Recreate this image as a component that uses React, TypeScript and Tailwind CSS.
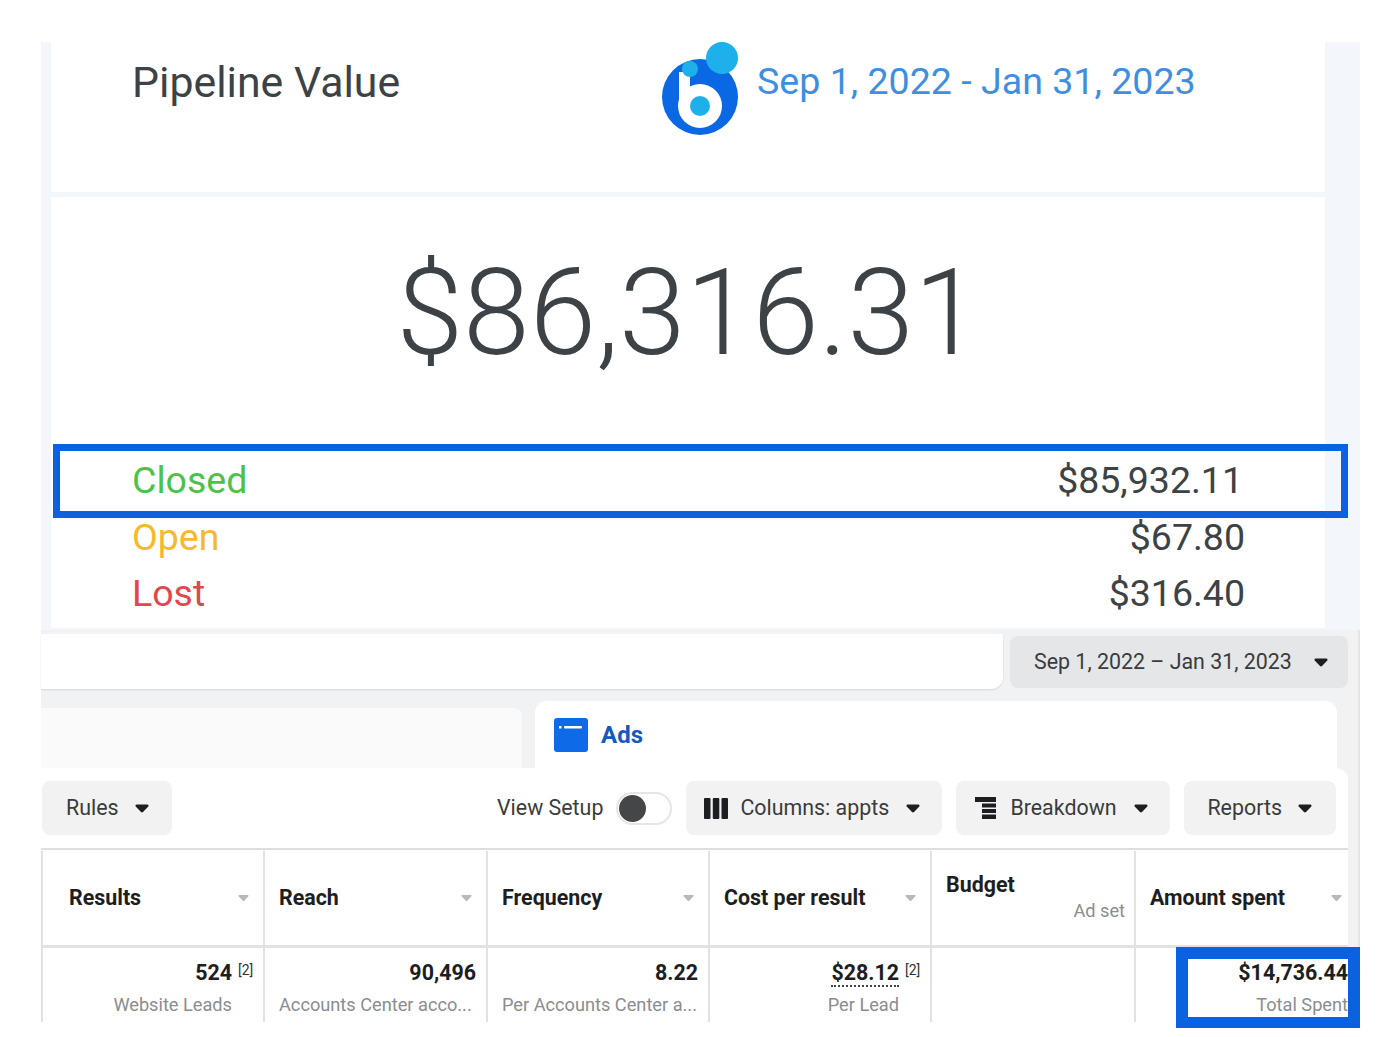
import React from "react"

function Caret({ className = "w-[14px] h-[9px] text-[#1c1e21]" }: { className?: string }) {
  return (
    <svg viewBox="0 0 14 9" className={className} fill="currentColor">
      <path d="M1.6 0.6h10.8c1 0 1.5 1.1.9 1.8L8 8c-.5.6-1.5.6-2 0L.7 2.4C.1 1.7.6.6 1.6.6z" />
    </svg>
  )
}

function Logo() {
  return (
    <svg viewBox="0 0 76 93" className="w-[76px] h-[93px] shrink-0">
      <circle cx="38" cy="55" r="38" fill="#0b68e4" />
      <circle cx="38" cy="64" r="22" fill="#ffffff" />
      <rect x="17" y="30" width="11" height="34" fill="#ffffff" />
      <circle cx="38" cy="64" r="10" fill="#1db0ea" />
      <circle cx="60" cy="16" r="16" fill="#1db0ea" />
      <circle cx="28" cy="27" r="8" fill="#1db0ea" />
    </svg>
  )
}

function ToolButton({ label, icon, className }: { label: string; icon?: React.ReactNode; className: string }) {
  return (
    <div className={`h-[54px] bg-[#f2f2f2] rounded-lg flex items-center ${className}`}>
      {icon}
      <span className="text-[21.4px] text-[#3a3b3d]">{label}</span>
      <Caret className="w-[14px] h-[9px] text-[#1c1e21] ml-auto" />
    </div>
  )
}

const headers = [
  { title: "Results", w: "w-[222px]", pad: "pl-[26px]" },
  { title: "Reach", w: "w-[223px]", pad: "pl-[14px]" },
  { title: "Frequency", w: "w-[222px]", pad: "pl-[14px]" },
  { title: "Cost per result", w: "w-[222px]", pad: "pl-[14px]" },
]

const cells = [
  { value: "524", ref: true, sub: "Website Leads", w: "w-[222px]", subCls: "text-right pr-[21px]", dotted: false },
  { value: "90,496", ref: false, sub: "Accounts Center acco...", w: "w-[223px]", subCls: "text-left pl-[14px]", dotted: false },
  { value: "8.22", ref: false, sub: "Per Accounts Center a...", w: "w-[222px]", subCls: "text-left pl-[14px]", dotted: false },
  { value: "$28.12", ref: true, sub: "Per Lead", w: "w-[222px]", subCls: "text-right pr-[21px]", dotted: true },
]

export default function App() {
  return (
    <div className="relative w-[1400px] h-[1037px] bg-white overflow-hidden pt-[42px] pl-[41px] font-['Roboto',sans-serif]">
      <div className="w-[1319px]">
        {/* Pipeline value report */}
        <div className="flex bg-[#f3f6fa] h-[588px] pl-[10px] pr-[35px]">
          <div className="w-[1274px] flex flex-col gap-[5px]">
            <div className="h-[150px] bg-white flex items-start pl-[81px]">
              <span className="w-[530px] mt-[15px] text-[42.8px] leading-[50px] text-[#3c4245]">Pipeline Value</span>
              <Logo />
              <span className="ml-[19px] mt-[15px] text-[37.6px] leading-[48px] text-[#3f8fe0]">
                Sep 1, 2022 - Jan 31, 2023
              </span>
            </div>
            <div className="h-[431px] bg-white pl-[81px] pr-[80px]">
              <div className="h-[240px] pt-[43px] text-center text-[120px] leading-[146px] font-light text-[#3c4245]">
                $86,316.31
              </div>
              <div className="flex justify-between text-[37.5px] leading-[56.5px] text-[#3c4245] mt-[15px]">
                <span className="text-[#4cc24a]">Closed</span>
                <span className="mr-[2px]">$85,932.11</span>
              </div>
              <div className="flex justify-between text-[37.5px] leading-[56.5px] text-[#3c4245]">
                <span className="text-[#f5b92e]">Open</span>
                <span>$67.80</span>
              </div>
              <div className="flex justify-between text-[37.5px] leading-[56.5px] text-[#3c4245]">
                <span className="text-[#e0484e]">Lost</span>
                <span>$316.40</span>
              </div>
            </div>
          </div>
        </div>

        {/* Ads manager */}
        <div className="h-[392px] bg-[#f1f2f3] border-r-2 border-[#e4e4e4]">
          <div className="flex pt-[4px] h-[59px]">
            <div className="w-[962px] h-[55px] bg-white rounded-br-xl shadow-[0_1px_2px_rgba(0,0,0,0.12)]" />
            <div className="ml-[7px] mt-[2px] w-[338px] h-[52px] bg-[#e4e6e8] rounded-lg flex items-center pl-[24px] pr-[20px]">
              <span className="text-[21.4px] text-[#3a3b3d]">Sep 1, 2022 – Jan 31, 2023</span>
              <Caret className="w-[14px] h-[9px] text-[#1c1e21] ml-auto" />
            </div>
          </div>

          <div className="flex items-end h-[79px]">
            <div className="w-[481px] h-[60px] bg-[#fafafa] rounded-tr-lg" />
            <div className="ml-[13px] w-[802px] h-[67px] bg-white rounded-t-xl flex items-center pl-[19px]">
              <svg viewBox="0 0 34 34" className="w-[34px] h-[34px]">
                <rect width="34" height="34" rx="3" fill="#0f6ae8" />
                <rect x="5" y="8" width="2.5" height="2.5" fill="#ffffff" />
                <rect x="10" y="8" width="18" height="2.5" rx="1" fill="#ffffff" />
              </svg>
              <span className="ml-[13px] text-[24px] font-bold text-[#1558c0]">Ads</span>
            </div>
          </div>

          <div className="w-[1307px] h-[80px] bg-white rounded-tr-xl flex items-center">
            <div className="ml-[1px] w-[130px] h-[54px] bg-[#f2f2f2] rounded-lg flex items-center pl-[24px] pr-[23px]">
              <span className="text-[21.4px] text-[#3a3b3d]">Rules</span>
              <Caret className="w-[14px] h-[9px] text-[#1c1e21] ml-auto" />
            </div>
            <span className="ml-[325px] text-[21.4px] text-[#3a3b3d]">View Setup</span>
            <div className="ml-[13px] w-[56px] h-[33px] rounded-full border-2 border-[#e6e6e6] bg-white flex items-center pl-[1px]">
              <div className="w-[27px] h-[27px] rounded-full bg-[#444648]" />
            </div>
            <ToolButton
              label="Columns: appts"
              className="ml-[14px] w-[256px] pl-[18px] pr-[22px]"
              icon={
                <svg viewBox="0 0 24 21" className="w-[24px] h-[21px] mr-[12px] text-[#1c1e21]" fill="currentColor">
                  <rect width="6.5" height="21" rx="1" />
                  <rect x="8.8" width="6.5" height="21" rx="1" />
                  <rect x="17.5" width="6.5" height="21" rx="1" />
                </svg>
              }
            />
            <ToolButton
              label="Breakdown"
              className="ml-[14px] w-[214px] pl-[19px] pr-[22px]"
              icon={
                <svg viewBox="0 0 22 22" className="w-[22px] h-[22px] mr-[13px] text-[#1c1e21]" fill="currentColor">
                  <rect width="21" height="5" />
                  <rect x="7" y="6.5" width="14" height="4" />
                  <rect x="7" y="12" width="14" height="4" />
                  <rect x="7" y="17.5" width="14" height="4.5" />
                </svg>
              }
            />
            <ToolButton label="Reports" className="ml-[14px] w-[152px] pl-[23px] pr-[24px]" />
          </div>

          {/* Table */}
          <div className="w-[1307px] h-[175px] bg-white border-t-2 border-[#dedede]">
            <div className="flex h-[98px] border-b-[3px] border-[#e2e2e2] pt-[1px] text-[21.4px] font-bold text-[#1c1e21]">
              {headers.map((h) => (
                <div
                  key={h.title}
                  className={`${h.w} ${h.pad} shrink-0 border-l-2 border-[#e2e2e2] flex items-center pr-[14px]`}
                >
                  <span>{h.title}</span>
                  <Caret className="w-[11px] h-[8px] text-[#b9b9b9] ml-auto" />
                </div>
              ))}
              <div className="w-[204px] shrink-0 border-l-2 border-[#e2e2e2] pl-[14px] pr-[9px] pt-[20px]">
                <div className="leading-[28px]">Budget</div>
                <div className="text-right text-[18.2px] leading-[24px] font-normal text-[#8a8d91]">Ad set</div>
              </div>
              <div className="w-[214px] shrink-0 border-l-2 border-[#e2e2e2] pl-[14px] pr-[6px] flex items-center">
                <span>Amount spent</span>
                <Caret className="w-[11px] h-[8px] text-[#b9b9b9] ml-auto" />
              </div>
            </div>
            <div className="flex h-[74px]">
              {cells.map((c) => (
                <div key={c.value} className={`${c.w} shrink-0 border-l-2 border-[#e2e2e2] pr-[10px] pt-[12px]`}>
                  <div className="flex justify-end items-start h-[30px]">
                    <span
                      className={`text-[21.4px] leading-[25px] font-bold text-[#1c1e21] ${
                        c.dotted ? "border-b-2 border-dotted border-[#444]" : ""
                      }`}
                    >
                      {c.value}
                    </span>
                    {c.ref && <span className="ml-[6px] w-[15px] text-[14px] leading-[20px] text-[#333]">[2]</span>}
                  </div>
                  <div className={`text-[18.2px] leading-[30px] text-[#8a8d91] truncate ${c.subCls}`}>{c.sub}</div>
                </div>
              ))}
              <div className="w-[204px] shrink-0 border-l-2 border-[#e2e2e2]" />
              <div className="w-[214px] shrink-0 border-l-2 border-[#e2e2e2] text-right pt-[12px]">
                <div className="h-[30px] text-[21.4px] leading-[25px] font-bold text-[#1c1e21]">$14,736.44</div>
                <div className="text-[18.2px] leading-[30px] text-[#8a8d91]">Total Spent</div>
              </div>
            </div>
          </div>
        </div>
      </div>

      {/* Highlight boxes */}
      <div className="absolute left-[53px] top-[444px] w-[1295px] h-[74px] border-[7px] border-[#0b62e0]" />
      <div className="absolute left-[1176px] top-[947px] w-[184px] h-[81px] border-[12px] border-b-[11px] border-[#0b62e0]" />
    </div>
  )
}
